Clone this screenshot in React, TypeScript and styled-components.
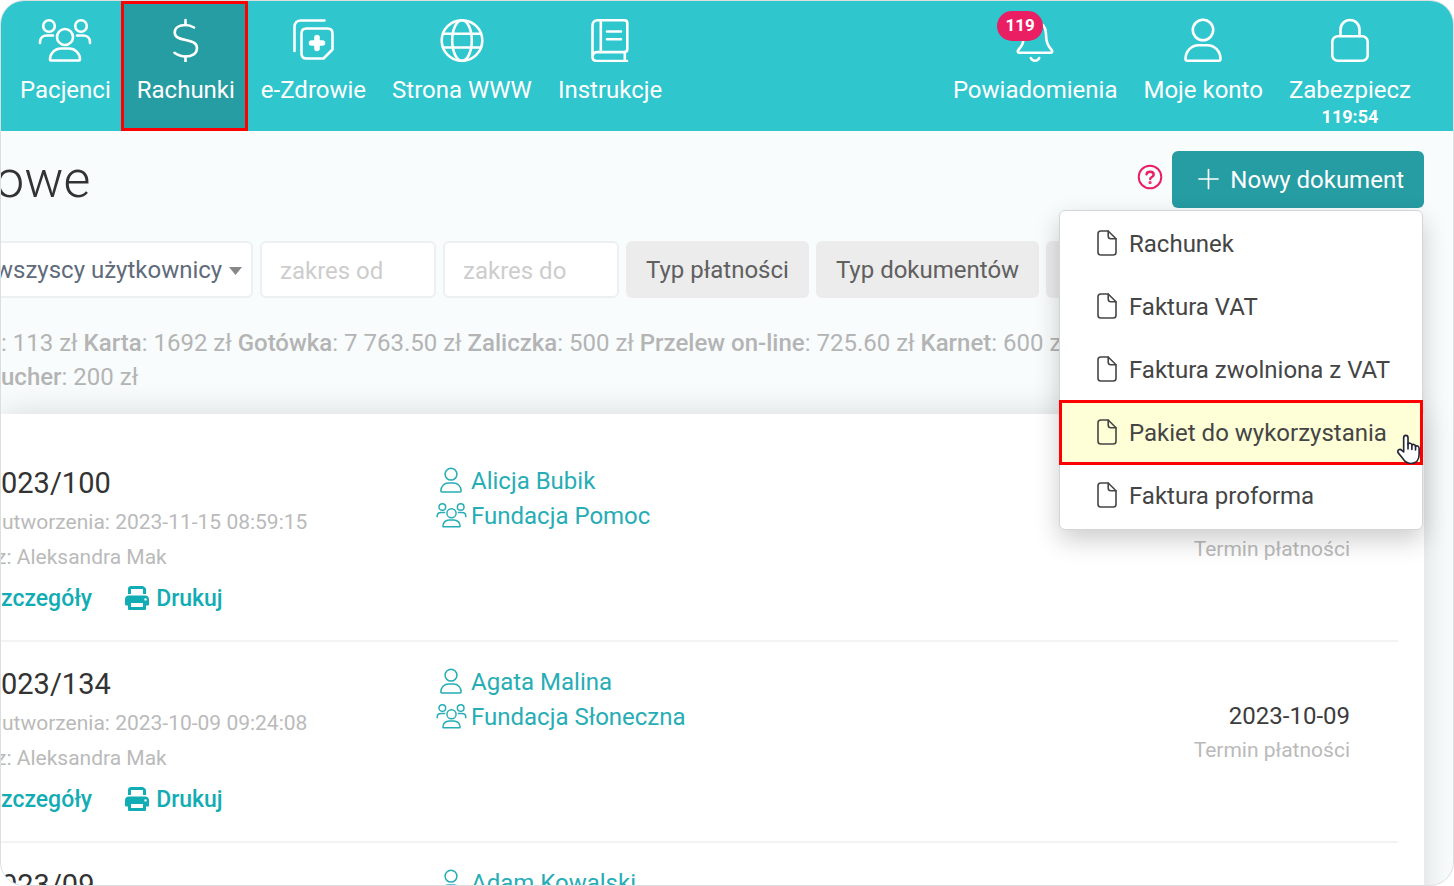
import React from "react";
import styled, { createGlobalStyle } from "styled-components";

const GlobalStyle = createGlobalStyle`
  *, *::before, *::after { box-sizing: border-box; }
  body {
    margin: 0;
    background: #ffffff;
    color: #3c3c3c;
    font-family: Roboto, "Liberation Sans", sans-serif;
    font-size: 24px;
  }
  button, input, select { font: inherit; }
  a { text-decoration: none; }
`;

const Shell = styled.div`
  display: flex;
  flex-direction: column;
  height: 100vh;
  overflow: hidden;
  background: #f8fcfd;
  border: 1px solid #dcdfe0;
  border-radius: 24px;
`;

const Header = styled.header`
  display: flex;
  flex: none;
  justify-content: space-between;
  height: 130px;
  padding: 0 29px 0 6px;
  background: #2fc6ce;
`;

const NavGroup = styled.nav`
  display: flex;
`;

const NavItem = styled.a<{ $active?: boolean }>`
  display: flex;
  flex-direction: column;
  align-items: center;
  padding: 17px 13px 0;
  color: #ffffff;
  line-height: 30px;
  white-space: nowrap;
  ${(p) =>
    p.$active &&
    `
    margin-left: -3px;
    padding-left: 16px;
    background: #269ca3;
    outline: 3px solid #ff0000;
    outline-offset: -3px;
  `}
`;

const NavIcon = styled.span`
  position: relative;
  display: flex;
  height: 44px;
  margin-bottom: 13px;
`;

const Badge = styled.span`
  position: absolute;
  top: -7px;
  right: 11px;
  width: 46px;
  height: 30px;
  border-radius: 15px;
  background: #e91e63;
  font-size: 17px;
  font-weight: 700;
  line-height: 28px;
  text-align: center;
`;

const Timer = styled.span`
  margin-top: 2px;
  font-size: 18px;
  font-weight: 700;
  line-height: 20px;
`;

const Line = styled.svg`
  display: block;
  flex: none;
  fill: none;
  stroke: currentColor;
  stroke-width: 2.6;
  stroke-linecap: round;
  stroke-linejoin: round;
`;

const Main = styled.main`
  display: flex;
  flex: 1;
  flex-direction: column;
  padding: 20px 29px 0 0;
`;

const TitleRow = styled.div`
  display: flex;
  align-items: center;
  justify-content: space-between;
  height: 57px;
  margin-bottom: 33px;
`;

const Title = styled.h1`
  margin: 0 0 0 -6px;
  color: #333333;
  font-size: 52px;
  font-weight: 300;
  line-height: 56px;
`;

const Actions = styled.div`
  position: relative;
  display: flex;
  gap: 9px;
`;

const HelpButton = styled.button`
  align-self: center;
  height: 26px;
  margin-bottom: 6px;
  padding: 0;
  border: 0;
  background: none;
  color: #e91e63;
`;

const NewButton = styled.button`
  display: flex;
  align-items: center;
  gap: 11px;
  height: 57px;
  padding: 0 20px 0 26px;
  border: 0;
  border-radius: 6px;
  background: #269ca3;
  color: #ffffff;

  svg { margin-bottom: 2px; }
`;

const Menu = styled.div`
  position: absolute;
  z-index: 2;
  top: 59px;
  right: 1px;
  width: 364px;
  height: 320px;
  padding-top: 1px;
  border: 1px solid #d3d6d7;
  border-radius: 6px;
  background: #ffffff;
  box-shadow: 0 10px 26px rgba(0, 0, 0, 0.2);
`;

const MenuItem = styled.a<{ $selected?: boolean }>`
  position: relative;
  display: flex;
  align-items: center;
  gap: 12px;
  height: 63px;
  padding-left: 37px;
  color: #454545;
  white-space: nowrap;

  > svg { margin-bottom: 2px; }
  ${(p) =>
    p.$selected &&
    `
    background: #feffd6;
    outline: 3px solid #ff0000;
    outline-offset: -2px;
  `}
`;

const PointerBox = styled.span`
  position: absolute;
  right: 0;
  bottom: 0;
  display: flex;
  width: 27px;
  height: 31px;
  overflow: hidden;
`;

const Filters = styled.form`
  display: flex;
  gap: 7px;
  height: 57px;
  margin-bottom: 28px;
`;

const SelectBox = styled.div`
  position: relative;
  flex: none;
  width: 252px;
  border: 2px solid #edf0f1;
  border-left: 0;
  border-radius: 0 6px 6px 0;
  background: #ffffff;
  overflow: hidden;

  svg {
    position: absolute;
    top: 24px;
    right: 9px;
    pointer-events: none;
  }
`;

const Select = styled.select`
  appearance: none;
  width: 100%;
  height: 100%;
  margin-left: -6px;
  padding: 0;
  border: 0;
  background: none;
  color: #5f6b7a;
`;

const DateInput = styled.input`
  flex: none;
  width: 176px;
  padding: 2px 18px 0;
  border: 2px solid #edf0f1;
  border-radius: 6px;
  background: #ffffff;

  &::placeholder { color: #cdcdcd; opacity: 1; }
`;

const FilterButton = styled.button`
  flex: none;
  min-width: 100px;
  padding: 0 20px;
  border: 0;
  border-radius: 6px;
  background: #ececec;
  color: #606060;
  white-space: nowrap;
`;

const Summary = styled.p`
  margin: 0 0 20px;
  color: #b4b4b4;
  line-height: 34px;
  white-space: nowrap;

  b { font-weight: 500; }
`;

const Card = styled.section`
  flex: 1;
  padding: 27px 26px 0 0;
  background: #ffffff;
  box-shadow: 0 0 32px rgba(0, 0, 0, 0.14);
`;

const Row = styled.article`
  display: grid;
  grid-template-columns: 435px 1fr auto;
  height: 201px;
  padding-right: 48px;
  border-bottom: 2px solid #f3f3f3;
`;

const DocNumber = styled.h2`
  margin: 24px 0 4px;
  color: #333333;
  font-size: 29px;
  font-weight: 400;
  line-height: 36px;
`;

const Meta = styled.div<{ $shift?: boolean }>`
  margin-left: ${(p) => (p.$shift ? "-5px" : "1px")};
  color: #bababa;
  font-size: 21px;
  line-height: 35px;
`;

const Links = styled.div`
  display: flex;
  gap: 33px;
  margin-top: 7px;
`;

const ActionLink = styled.a`
  display: flex;
  align-items: center;
  gap: 7px;
  color: #12acb4;
  font-size: 23px;
  font-weight: 500;
  line-height: 34px;

  svg { margin-bottom: 2px; }
`;

const People = styled.div`
  display: flex;
  flex-direction: column;
  padding-top: 22px;
`;

const PersonLink = styled.a`
  display: flex;
  align-items: center;
  gap: 5px;
  height: 35px;
  color: #27adb5;
`;

const PersonIcon = styled.span`
  display: flex;
  justify-content: center;
  width: 30px;
  margin-bottom: 2px;
`;

const Due = styled.div`
  padding-top: 56px;
  text-align: right;
`;

const DueDate = styled.div`
  height: 35px;
  color: #3c3c3c;
  line-height: 36px;
`;

function UsersIcon({ width = 54, height = 44 }: { width?: number; height?: number }) {
  return (
    <Line width={width} height={height} viewBox="0 0 54 44">
      <circle cx="11" cy="8" r="5.8" />
      <circle cx="43" cy="8" r="5.8" />
      <circle cx="27" cy="19" r="8" />
      <path d="M2 25v-1c0-4 3-6.500 7-6.500h6M52 25v-1c0-4-3-6.500-7-6.500h-6" />
      <path d="M12 41.500c0-6.500 5-11 11-11h8c6 0 11 4.500 11 11 0 .8-.5 1-1 1H13c-.6 0-1-.3-1-1z" />
    </Line>
  );
}

function UserIcon({ width = 38, height = 44 }: { width?: number; height?: number }) {
  return (
    <Line width={width} height={height} viewBox="0 0 38 44">
      <circle cx="19" cy="12" r="10.2" />
      <path d="M1.500 41c0-8 6-13.800 13-13.800h9c7 0 13 5.800 13 13.800 0 1.200-.6 1.700-1.600 1.700H3.100c-1 0-1.600-.5-1.600-1.700z" />
    </Line>
  );
}

function DollarIcon() {
  return (
    <Line width="27" height="44" viewBox="0 0 27 44">
      <path d="M13.500 2v5M13.500 38.500v5" />
      <path d="M22 9.500C19.500 8 16.500 7 13.500 7 7 7 2.700 9.800 2.700 14.500 2.700 25 25 19 25 30c0 5.500-5 8.500-11.500 8.500-4.500 0-8-1.500-11-3.700" />
    </Line>
  );
}

function HealthIcon() {
  return (
    <Line width="44" height="44" viewBox="0 0 44 44">
      <path d="M33.500 2.500H10C6 2.500 3.500 5 3.500 9v24" />
      <path d="M15.500 10.500h21c3.300 0 5 1.700 5 5v16L32.500 40.500h-17c-3.300 0-5-1.700-5-5v-20c0-3.300 1.700-5 5-5z" />
      <path d="M26 19.500v11M20.500 25h11" strokeWidth="5.600" style={{ strokeWidth: 5.6 }} />
    </Line>
  );
}

function GlobeIcon() {
  return (
    <Line width="44" height="44" viewBox="0 0 44 44">
      <circle cx="22" cy="22.500" r="20.300" />
      <ellipse cx="22" cy="22.500" rx="9.800" ry="20.300" />
      <path d="M3 15.800h38M3 29.500h38" />
    </Line>
  );
}

function BookIcon() {
  return (
    <Line width="38" height="44" viewBox="0 0 38 44">
      <path d="M1.500 39V7.500c0-3.500 2-5.200 5-5.200h27c2 0 2.800 1 2.800 2.800v26c0 2-1 3-2.800 3H6C3 34.100 1.500 36 1.500 39s1.500 4 4.500 4h30" />
      <path d="M9.800 2.500V34M33.800 34v8.500M16 13.500h14M16 21.200h14" />
    </Line>
  );
}

function BellIcon() {
  return (
    <Line width="38" height="44" viewBox="0 0 38 44">
      <path d="M19 4C11 4 8 10 8 16c0 10-3 12.500-5.700 16-1 1.400-.4 2.700 1.200 2.700h31c1.600 0 2.200-1.300 1.200-2.700C33 28.500 30 26 30 16 30 10 27 4 19 4zM19 1.500V4" />
      <path d="M14.800 40c.8 1.800 2.200 2.700 4.200 2.700s3.400-.9 4.200-2.700" />
    </Line>
  );
}

function LockIcon() {
  return (
    <Line width="38" height="44" viewBox="0 0 38 44">
      <rect x="1.300" y="18.200" width="35.400" height="24.500" rx="5.500" />
      <path d="M9.500 18v-6.500a9.500 9.500 0 0 1 19 0V18" />
    </Line>
  );
}

function HelpIcon() {
  return (
    <Line width="26" height="26" viewBox="0 0 26 26" style={{ strokeWidth: 2 }}>
      <circle cx="13" cy="13" r="11.300" />
      <path d="M9.500 10.300C9.800 8.600 11 7.800 13 7.800c2.200 0 3.700 1.100 3.700 2.900 0 2.300-3.500 2.400-3.500 4.300" strokeWidth="2.400" />
      <circle cx="13.100" cy="18.500" r=".6" />
    </Line>
  );
}

function PlusIcon() {
  return (
    <Line width="21" height="22" viewBox="0 0 21 22" style={{ strokeWidth: 1.7 }}>
      <path d="M10.500 1.500v19M1 11h19" />
    </Line>
  );
}

function FileIcon() {
  return (
    <Line width="20" height="26" viewBox="0 0 20 26" style={{ strokeWidth: 1.6 }}>
      <path d="M3.800 1h7.400L19 8.700v13.500c0 1.900-1 2.800-2.800 2.800H3.800C1.900 25 1 24.100 1 22.200V3.800C1 1.900 1.900 1 3.800 1z" />
      <path d="M11.200 1v5c0 1.800.9 2.700 2.700 2.700H19" />
    </Line>
  );
}

function PrinterIcon() {
  return (
    <svg width="24" height="24" viewBox="0 0 24 24" fill="currentColor">
      <path d="M3 8V3.200C3 1.200 4.200 0 6.200 0h11c1 0 1.600.3 2.200.9l1 1c.5.500.7 1.100.7 1.900V8H18V3H6v5H3z" />
      <path d="M4 9.500h16c2.500 0 4 1.500 4 4V18c0 1-.5 1.500-1.500 1.500H21v3c0 1-.5 1.500-1.500 1.500h-15C3.500 24 3 23.500 3 22.500v-3H1.500C.5 19.500 0 19 0 18v-4.500c0-2.500 1.500-4 4-4zM6 17v4h12v-4H6zm14.500-4.800a1.200 1.200 0 1 0 0 2.400 1.200 1.200 0 0 0 0-2.400z" fillRule="evenodd" />
    </svg>
  );
}

function HandPointer() {
  return (
    <PointerBox>
      <svg width="28" height="32" viewBox="0 0 28 32" fill="#ffffff" stroke="#25253a" strokeWidth="1.700" strokeLinejoin="round" strokeLinecap="round">
        <path d="M9 19V4.500c0-3.500 4.500-3.500 4.500 0V11c.5-1.600 4-1.300 4 1 .8-1.300 3.800-.8 3.800 1.300.9-1 3.700-.6 3.700 2V22c0 5-3 9-8.500 9-5 0-7-2.500-9-6L3.300 20c-1.500-3.300 2-4.500 3.700-2.500z" />
        <path d="M13.500 10v6M17.500 12v4.500M21.300 13.500V17" fill="none" />
      </svg>
    </PointerBox>
  );
}

const menuItems = ["Rachunek", "Faktura VAT", "Faktura zwolniona z VAT", "Pakiet do wykorzystania", "Faktura proforma"];

const documents = [
  { number: "023/100", created: "2023-11-15 08:59:15", author: "Aleksandra Mak", person: "Alicja Bubik", group: "Fundacja Pomoc", due: "" },
  { number: "023/134", created: "2023-10-09 09:24:08", author: "Aleksandra Mak", person: "Agata Malina", group: "Fundacja Słoneczna", due: "2023-10-09" },
];

export default function App() {
  return (
    <>
      <GlobalStyle />
      <Shell>
        <Header>
          <NavGroup>
            <NavItem href="#"><NavIcon><UsersIcon /></NavIcon>Pacjenci</NavItem>
            <NavItem href="#" $active><NavIcon><DollarIcon /></NavIcon>Rachunki</NavItem>
            <NavItem href="#"><NavIcon><HealthIcon /></NavIcon>e-Zdrowie</NavItem>
            <NavItem href="#"><NavIcon><GlobeIcon /></NavIcon>Strona WWW</NavItem>
            <NavItem href="#"><NavIcon><BookIcon /></NavIcon>Instrukcje</NavItem>
          </NavGroup>
          <NavGroup>
            <NavItem href="#"><NavIcon><BellIcon /><Badge>119</Badge></NavIcon>Powiadomienia</NavItem>
            <NavItem href="#"><NavIcon><UserIcon /></NavIcon>Moje konto</NavItem>
            <NavItem href="#"><NavIcon><LockIcon /></NavIcon>Zabezpiecz<Timer>119:54</Timer></NavItem>
          </NavGroup>
        </Header>

        <Main>
          <TitleRow>
            <Title>owe</Title>
            <Actions>
              <HelpButton type="button" aria-label="?"><HelpIcon /></HelpButton>
              <NewButton type="button"><PlusIcon />Nowy dokument</NewButton>
              <Menu>
                {menuItems.map((item, i) => (
                  <MenuItem key={item} href="#" $selected={i === 3}>
                    <FileIcon />
                    {item}
                    {i === 3 && <HandPointer />}
                  </MenuItem>
                ))}
              </Menu>
            </Actions>
          </TitleRow>

          <Filters>
            <SelectBox>
              <Select name="user" aria-label="wszyscy użytkownicy">
                <option>wszyscy użytkownicy</option>
              </Select>
              <svg width="13" height="8" viewBox="0 0 13 8" fill="#888888"><path d="M0 0h13L6.500 8z" /></svg>
            </SelectBox>
            <DateInput type="text" name="from" placeholder="zakres od" aria-label="zakres od" />
            <DateInput type="text" name="to" placeholder="zakres do" aria-label="zakres do" />
            <FilterButton type="button">Typ płatności</FilterButton>
            <FilterButton type="button">Typ dokumentów</FilterButton>
            <FilterButton type="button" tabIndex={-1} aria-hidden="true" />
          </Filters>

          <Summary>
            : 113 zł <b>Karta</b>: 1692 zł <b>Gotówka</b>: 7 763.50 zł <b>Zaliczka</b>: 500 zł <b>Przelew on-line</b>: 725.60 zł <b>Karnet</b>: 600 zł
            <br />
            <b>ucher</b>: 200 zł
          </Summary>

          <Card>
            {documents.map((doc) => (
              <Row key={doc.number}>
                <div>
                  <DocNumber>{doc.number}</DocNumber>
                  <Meta>utworzenia: {doc.created}</Meta>
                  <Meta $shift>z: {doc.author}</Meta>
                  <Links>
                    <ActionLink href="#">zczegóły</ActionLink>
                    <ActionLink href="#"><PrinterIcon />Drukuj</ActionLink>
                  </Links>
                </div>
                <People>
                  <PersonLink href="#"><PersonIcon><UserIcon width={22} height={26} /></PersonIcon>{doc.person}</PersonLink>
                  <PersonLink href="#"><PersonIcon><UsersIcon width={31} height={26} /></PersonIcon>{doc.group}</PersonLink>
                </People>
                <Due>
                  <DueDate>{doc.due}</DueDate>
                  <Meta>Termin płatności</Meta>
                </Due>
              </Row>
            ))}
            <Row>
              <DocNumber>023/09</DocNumber>
              <People>
                <PersonLink href="#"><PersonIcon><UserIcon width={22} height={26} /></PersonIcon>Adam Kowalski</PersonLink>
              </People>
            </Row>
          </Card>
        </Main>
      </Shell>
    </>
  );
}
